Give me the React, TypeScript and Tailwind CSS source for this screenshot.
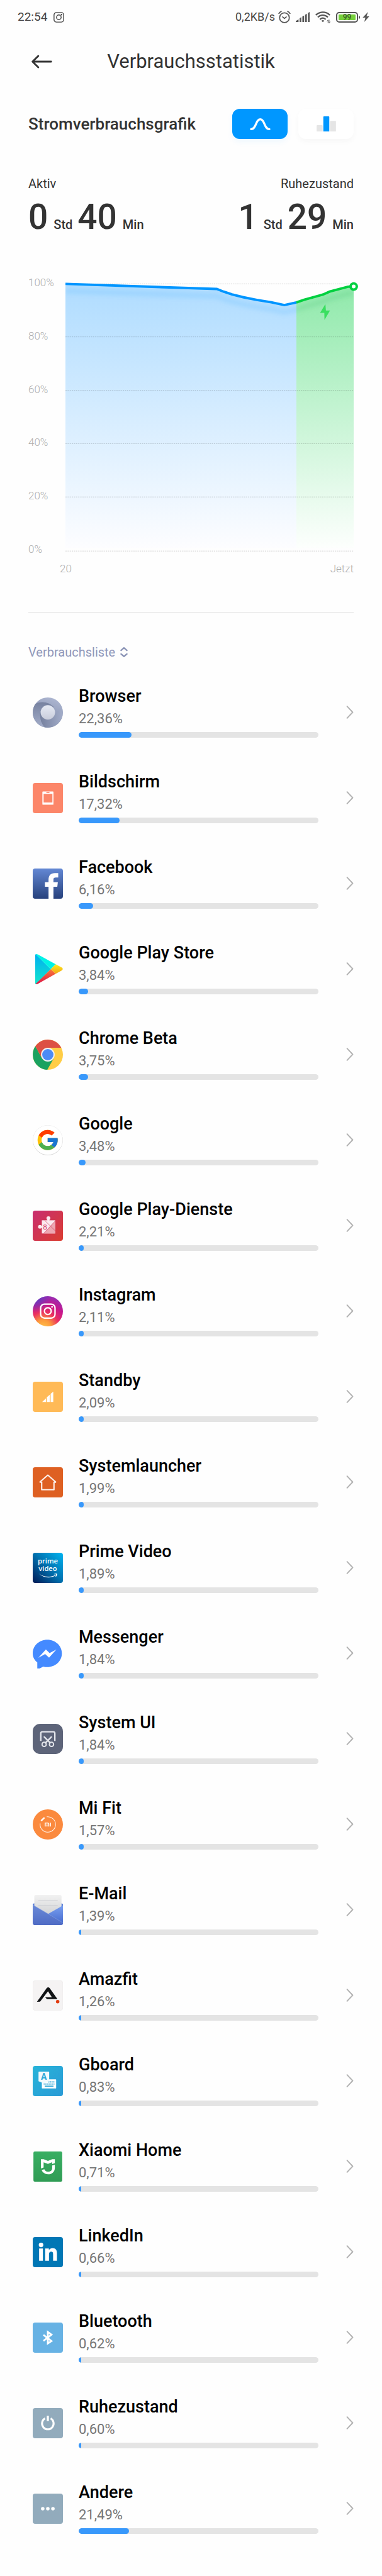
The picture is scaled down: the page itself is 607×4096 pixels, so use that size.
import { useState } from "react";
import type { ReactNode } from "react";
import { FcGoogle } from "react-icons/fc";

type Mode = "curve" | "bars";

interface UsageRow {
  name: string;
  value: number;
  icon: ReactNode;
}

const fmt = (v: number) => v.toFixed(2).replace(".", ",") + "%";

/** Battery history: x = time, y = level */
const BLUE_LINE =
  "0,22 428,36.5 447,44 471,52 504,60 541,67.5 582,74 619,82 653,74.5";
const GREEN_LINE = "653,74.5 675,67 729,52 747,44 799,30 815,29.5";
const GRID = [22, 172, 323, 474, 625, 778];

/* ---------- app icons, all on an 86 x 86 grid ---------- */

function AppIcon({ children }: { children: ReactNode }) {
  return (
    <svg viewBox="0 0 86 86" className="size-12 shrink-0" aria-hidden="true">
      {children}
    </svg>
  );
}

function Tile({ fill }: { fill: string }) {
  return <rect width="86" height="86" rx="7" fill={fill} />;
}

const BrowserIcon = (
  <AppIcon>
    <defs>
      <linearGradient id="br-a" x1="0" y1="0" x2="0" y2="1">
        <stop offset="0" stopColor="#7782a0" />
        <stop offset="1" stopColor="#a3adc9" />
      </linearGradient>
      <linearGradient id="br-b" x1="0" y1="0" x2="1" y2="0">
        <stop offset="0" stopColor="#75809e" />
        <stop offset="1" stopColor="#a3adc9" />
      </linearGradient>
      <linearGradient id="br-c" x1="0.2" y1="1" x2="0.6" y2="0">
        <stop offset="0" stopColor="#7480a0" />
        <stop offset="1" stopColor="#acb5d0" />
      </linearGradient>
      <linearGradient id="br-d" x1="0" y1="0" x2="0" y2="1">
        <stop offset="0" stopColor="#e6eaf4" />
        <stop offset="1" stopColor="#c9cddb" />
      </linearGradient>
    </defs>
    <circle cx="43" cy="43" r="43" fill="url(#br-c)" />
    <path d="M8 18C26 9 48 14 60 27L43 43L21 42C20 60 25 76 35 85A43 43 0 0 1 8 18Z" fill="url(#br-a)" />
    <path d="M21 42C20 60 25 76 35 85A43 43 0 0 0 83 29C78 40 68 46 60 48L43 43Z" fill="url(#br-b)" />
    <circle cx="43" cy="42.5" r="20.5" fill="url(#br-d)" />
  </AppIcon>
);

const ScreenIcon = (
  <AppIcon>
    <Tile fill="#fc8669" />
    <path fillRule="evenodd" fill="#fff" d="M29 24H57.5Q59 24 59 25.5V60.5Q59 62 57.5 62H29Q27.5 62 27.5 60.5V25.5Q27.5 24 29 24ZM31 31V55.5H56V31Z" />
    <rect x="38.5" y="26" width="9.5" height="2.8" rx="1.4" fill="#fc8669" />
  </AppIcon>
);

const FacebookIcon = (
  <AppIcon>
    <defs>
      <linearGradient id="fb" x1="0" y1="0" x2="0" y2="1">
        <stop offset="0" stopColor="#6388d4" />
        <stop offset="1" stopColor="#27417c" />
      </linearGradient>
    </defs>
    <Tile fill="url(#fb)" />
    <path fill="#fff" d="M45 86V52H34.7V39H45V32C45 19 52 13 63 13H72.6V25.5H66C61 25.5 59 27 59 31V39H71.5L70 52H59V86Z" />
  </AppIcon>
);

const PlayStoreIcon = (
  <AppIcon>
    <defs>
      <linearGradient id="ps-a" x1="0" y1="0" x2="0" y2="1">
        <stop offset="0" stopColor="#00aef0" />
        <stop offset="1" stopColor="#12e6cc" />
      </linearGradient>
      <linearGradient id="ps-b" x1="0" y1="0" x2="0" y2="1">
        <stop offset="0" stopColor="#ffee1c" />
        <stop offset="1" stopColor="#f2a516" />
      </linearGradient>
      <linearGradient id="ps-c" x1="0" y1="0" x2="0" y2="1">
        <stop offset="0" stopColor="#fb7a36" />
        <stop offset="1" stopColor="#dc1548" />
      </linearGradient>
    </defs>
    <path d="M7 2.5Q7 1 9 1L51.4 43L9 85.5Q7 85.5 7 83.5Z" fill="url(#ps-a)" />
    <path d="M8 0.5Q11 -0.5 15 1.5L65.5 29L51.4 43Z" fill="#00f2e6" />
    <path d="M65.5 29L83 38.5Q88 42.5 83 46.5L65 56.5L51.4 43Z" fill="url(#ps-b)" />
    <path d="M8 85.5Q11 87 15 84.5L65 56.5L51.4 43Z" fill="url(#ps-c)" />
  </AppIcon>
);

const ChromeIcon = (
  <AppIcon>
    <circle cx="43" cy="43" r="43" fill="#ffcd46" />
    <path d="M7.5 19A43 43 0 0 0 41.5 86L60 53L43 60L26 53Z" fill="#1aa260" />
    <path d="M7.5 19A43 43 0 0 1 81.3 23.5H43L26 53Z" fill="#dd5044" />
    <circle cx="43" cy="43" r="19.5" fill="#f2f2f2" />
    <circle cx="43" cy="43" r="16" fill="#4c8bf5" />
  </AppIcon>
);

const GoogleIcon = (
  <AppIcon>
    <circle cx="43" cy="43.5" r="42.5" fill="#c8c8c8" />
    <circle cx="43" cy="42.5" r="42.5" fill="#ececec" />
    <circle cx="43" cy="42.5" r="41.8" fill="#fff" />
    <FcGoogle x="8" y="8" size={69} />
  </AppIcon>
);

const PlayServicesIcon = (
  <AppIcon>
    <defs>
      <linearGradient id="gp" x1="0" y1="0" x2="1" y2="1">
        <stop offset="0" stopColor="#c82e70" />
        <stop offset="1" stopColor="#da3d30" />
      </linearGradient>
    </defs>
    <Tile fill="url(#gp)" />
    <g fill="#fbeaf0">
      <rect x="26" y="27.5" width="38" height="37.5" />
      <circle cx="44.7" cy="21.5" r="5.5" />
      <rect x="41.5" y="24" width="6" height="5" />
      <circle cx="20.5" cy="46" r="5.2" />
      <rect x="22" y="43.5" width="6" height="5" />
    </g>
    <path d="M64 29.5L31 65H64Z" fill="#eda7b2" />
    <path d="M33.7 27.5L64 57.5M64 29.5L31 65" stroke="#d23a58" strokeWidth="1.2" />
    <text x="35" y="53" textAnchor="middle" fontFamily="Liberation Serif, serif" fontSize="22" fill="#d03560">8</text>
  </AppIcon>
);

const InstagramIcon = (
  <AppIcon>
    <defs>
      <radialGradient id="ig-a" cx="0.35" cy="1.05" r="1.05">
        <stop offset="0" stopColor="#ffc24a" />
        <stop offset="0.25" stopColor="#fc9a3c" />
        <stop offset="0.5" stopColor="#ea3060" />
        <stop offset="0.75" stopColor="#c8168c" />
        <stop offset="1" stopColor="#9a2bb0" />
      </radialGradient>
      <radialGradient id="ig-b" cx="0.1" cy="0.05" r="0.5">
        <stop offset="0" stopColor="#5a40c4" />
        <stop offset="1" stopColor="#5a40c4" stopOpacity="0" />
      </radialGradient>
    </defs>
    <circle cx="43" cy="43" r="43" fill="url(#ig-a)" />
    <circle cx="43" cy="43" r="43" fill="url(#ig-b)" />
    <rect x="22.5" y="22.5" width="41" height="40" rx="11" fill="none" stroke="#fff" strokeWidth="4" />
    <circle cx="43" cy="42.5" r="9.7" fill="none" stroke="#fff" strokeWidth="4" />
    <circle cx="55" cy="30.5" r="2.5" fill="#fff" />
  </AppIcon>
);

const StandbyIcon = (
  <AppIcon>
    <Tile fill="#ffba57" />
    <path fill="#fff" d="M26.8 58L37.5 47.5V58ZM40 44.5L48.5 37V58H40ZM51 34.5L58.5 28V58H51Z" />
  </AppIcon>
);

const LauncherIcon = (
  <AppIcon>
    <Tile fill="#de6022" />
    <path d="M25.5 41V64H60.5V41M19.5 42.5H25.5M60.5 42.5H66.5M20 42.5L43 22.5L66 42.5" fill="none" stroke="#fdf0ea" strokeWidth="3.8" strokeLinejoin="round" />
  </AppIcon>
);

const PrimeVideoIcon = (
  <AppIcon>
    <defs>
      <linearGradient id="pv" x1="0" y1="1" x2="1" y2="0">
        <stop offset="0" stopColor="#001a55" />
        <stop offset="0.55" stopColor="#0077b5" />
        <stop offset="1" stopColor="#00b4f0" />
      </linearGradient>
    </defs>
    <Tile fill="url(#pv)" />
    <g fill="#fff" fontFamily="Open Sans, sans-serif" fontWeight="600" fontSize="20" textAnchor="middle">
      <text x="43" y="31">prime</text>
      <text x="43" y="52.5">video</text>
    </g>
    <path d="M17 59C32 70 51 71 65 62.5L66 64C53 73 32 73 17 59ZM61 60.5C64 59 68 58.5 69.5 60C70 62 68.5 66 66 68.5L64.8 68C66 65 66.8 62.5 66.3 61.8C65.5 61 63 61.3 61 61.5Z" fill="#fff" />
  </AppIcon>
);

const MessengerIcon = (
  <AppIcon>
    <path d="M41.5 4C18.5 4 0 21 0 43.5C0 54 5 62.5 13 68.5V86H19.5L30 80.5C33.5 81.5 37.5 82 41.5 82C64.5 82 83 65 83 43C83 21 64.5 4 41.5 4Z" fill="#448aff" />
    <path d="M16 55.6L37.5 32L48 42L67.5 32L46.5 55L35.4 44.8Z" fill="#fff" />
  </AppIcon>
);

const SystemUiIcon = (
  <AppIcon>
    <rect width="86" height="86" rx="21" fill="#5d6479" />
    <g fill="none" stroke="#e2e4ea" strokeWidth="4.2">
      <path d="M23 49V27Q23 22.5 27.5 22.5H58.5Q63 22.5 63 27V49" />
      <circle cx="32.5" cy="58.5" r="6" strokeWidth="3.5" />
      <circle cx="53.5" cy="58.5" r="6" strokeWidth="3.5" />
      <path d="M36.5 54L53 37.5M49.5 54L33 37.5" strokeLinecap="round" />
    </g>
  </AppIcon>
);

const MiFitIcon = (
  <AppIcon>
    <circle cx="43" cy="43" r="43" fill="#fb8a3e" />
    <path d="M40 21.2A22 22 0 1 1 21.2 40" fill="none" stroke="#fff3ea" strokeWidth="1.8" />
    <path d="M25 31.5L32 25" stroke="#fff" strokeWidth="4.5" strokeLinecap="round" />
    <path d="M35.5 49V39H42.5Q45.5 39 45.5 42V49M40.5 43V49M50.5 38V49" fill="none" stroke="#fff3ea" strokeWidth="3" />
  </AppIcon>
);

const MailIcon = (
  <AppIcon>
    <defs>
      <linearGradient id="ml-a" x1="0" y1="0" x2="0" y2="1">
        <stop offset="0" stopColor="#f2f2f2" />
        <stop offset="1" stopColor="#cfd0d2" />
      </linearGradient>
      <linearGradient id="ml-b" x1="0" y1="0" x2="0" y2="1">
        <stop offset="0" stopColor="#6a8ad8" />
        <stop offset="1" stopColor="#4f6bc4" />
      </linearGradient>
      <linearGradient id="ml-c" x1="0" y1="0" x2="0" y2="1">
        <stop offset="0" stopColor="#7aa0f0" />
        <stop offset="1" stopColor="#4468cc" />
      </linearGradient>
    </defs>
    <path d="M0 27Q0 24 4 24H82Q86 24 86 27V60H0Z" fill="#5b7fd8" />
    <path d="M4.5 5Q4.5 0 9 0H77Q82 0 82 5V60H4.5Z" fill="url(#ml-a)" />
    <path d="M16 16.5H71M16 30.5H71" stroke="#c6c8cb" strokeWidth="1.5" />
    <path d="M86 30L44 54L40 60L86 84Z" fill="url(#ml-c)" />
    <path d="M0 28L44 54L86 80Q86 86 79 86H7Q0 86 0 80Z" fill="url(#ml-b)" />
    <path d="M0 28.5L44 54L86 79.5" fill="none" stroke="#8aa4e6" />
  </AppIcon>
);

const AmazfitIcon = (
  <AppIcon>
    <rect x="0.5" y="0.5" width="85" height="85" rx="7" fill="#f5f3f3" stroke="#e8e6e6" />
    <path d="M12 61L40 21.5Q44 17.5 48 21.5L70.5 53.5H40.5L35.4 48H54.5L43.5 31L21 60.5Z" fill="#111315" />
    <circle cx="71" cy="60.6" r="5" fill="#e23c10" />
  </AppIcon>
);

const GboardIcon = (
  <AppIcon>
    <defs>
      <linearGradient id="gb" x1="0" y1="0" x2="1" y2="1">
        <stop offset="0" stopColor="#27b4d9" />
        <stop offset="1" stopColor="#2a9ad6" />
      </linearGradient>
    </defs>
    <Tile fill="url(#gb)" />
    <rect x="26" y="38" width="40.7" height="26" rx="1.5" fill="#fff" />
    <path d="M44 45.5H64M31 51.5H62" stroke="#2aa4d6" strokeWidth="3" strokeDasharray="3.5 1.2" />
    <path d="M34 57.5H59" stroke="#2aa4d6" strokeWidth="3" />
    <path d="M18 16H45.5Q46.8 16 46.8 17.5V43.5L31.6 49.5L16.5 43.5V17.5Q16.5 16 18 16Z" fill="#f2fafd" />
    <text x="31.6" y="39" textAnchor="middle" fontFamily="Roboto, sans-serif" fontWeight="700" fontSize="25" fill="#2aa9d8">A</text>
  </AppIcon>
);

const XiaomiHomeIcon = (
  <AppIcon>
    <defs>
      <linearGradient id="xh" x1="0" y1="0" x2="0" y2="1">
        <stop offset="0" stopColor="#38ae62" />
        <stop offset="1" stopColor="#309c55" />
      </linearGradient>
    </defs>
    <rect x="2" width="82" height="86" rx="4" fill="url(#xh)" />
    <path fill="#fff" d="M23.3 22H31L43.3 27L55.5 22H63V33L55.4 36V30.5L43.3 35.5L31 31V45.5L23.3 48.5ZM25.5 53L33 50.5C35 55 39 57.5 44 57.5C51 57.5 55.4 54 55.4 47V40L63 37.5V46C63 58 55 65 43.5 65C35 65 28 60 25.5 53Z" />
  </AppIcon>
);

const LinkedInIcon = (
  <AppIcon>
    <Tile fill="#0077b5" />
    <circle cx="23.7" cy="22.5" r="6.5" fill="#fff" />
    <path fill="#fff" d="M18.2 32.7H29V67.7H18.2ZM35.4 32.7H46V37.5C48 34 52 32 56.5 32C66 32 69 38 69 47V67.7H58V49.5C58 44 57 41.5 52.5 41.5C48 41.5 46.3 44.5 46.3 49.5V67.7H35.4Z" />
  </AppIcon>
);

const BluetoothIcon = (
  <AppIcon>
    <Tile fill="#67b2e4" />
    <path d="M30.5 35L53.5 52.5L43 59.5V27L53.5 34.5L30.5 52" fill="none" stroke="#fff" strokeWidth="5" />
  </AppIcon>
);

const PowerIcon = (
  <AppIcon>
    <Tile fill="#92abbc" />
    <path d="M35 29.5A16.5 16.5 0 1 0 51 29.5" fill="none" stroke="#fff" strokeWidth="5.5" />
    <rect x="40" y="22" width="6" height="15" fill="#fff" />
  </AppIcon>
);

const OtherIcon = (
  <AppIcon>
    <Tile fill="#92abbc" />
    <g fill="#fff">
      <circle cx="28.5" cy="43" r="5" />
      <circle cx="43" cy="43" r="5" />
      <circle cx="57.5" cy="43" r="5" />
    </g>
  </AppIcon>
);

const ROWS: UsageRow[] = [
  { name: "Browser", value: 22.36, icon: BrowserIcon },
  { name: "Bildschirm", value: 17.32, icon: ScreenIcon },
  { name: "Facebook", value: 6.16, icon: FacebookIcon },
  { name: "Google Play Store", value: 3.84, icon: PlayStoreIcon },
  { name: "Chrome Beta", value: 3.75, icon: ChromeIcon },
  { name: "Google", value: 3.48, icon: GoogleIcon },
  { name: "Google Play-Dienste", value: 2.21, icon: PlayServicesIcon },
  { name: "Instagram", value: 2.11, icon: InstagramIcon },
  { name: "Standby", value: 2.09, icon: StandbyIcon },
  { name: "Systemlauncher", value: 1.99, icon: LauncherIcon },
  { name: "Prime Video", value: 1.89, icon: PrimeVideoIcon },
  { name: "Messenger", value: 1.84, icon: MessengerIcon },
  { name: "System UI", value: 1.84, icon: SystemUiIcon },
  { name: "Mi Fit", value: 1.57, icon: MiFitIcon },
  { name: "E-Mail", value: 1.39, icon: MailIcon },
  { name: "Amazfit", value: 1.26, icon: AmazfitIcon },
  { name: "Gboard", value: 0.83, icon: GboardIcon },
  { name: "Xiaomi Home", value: 0.71, icon: XiaomiHomeIcon },
  { name: "LinkedIn", value: 0.66, icon: LinkedInIcon },
  { name: "Bluetooth", value: 0.62, icon: BluetoothIcon },
  { name: "Ruhezustand", value: 0.6, icon: PowerIcon },
  { name: "Andere", value: 21.49, icon: OtherIcon },
];

function StatusBar() {
  return (
    <div className="flex h-[54px] items-center justify-between pl-7 pr-5 text-[#444]">
      <div className="flex items-center gap-[10px]">
        <span className="text-[19px] leading-6">22:54</span>
        <svg viewBox="0 0 30 30" className="size-[17px]" fill="none" stroke="#444" strokeWidth="2.5" aria-hidden="true">
          <rect x="1.5" y="1.5" width="27" height="27" rx="7" />
          <circle cx="15" cy="15" r="6.5" />
          <circle cx="22.5" cy="7.5" r="1" fill="#444" />
        </svg>
      </div>
      <div className="flex items-center">
        <span className="text-[18px] leading-6">0,2KB/s</span>
        <svg viewBox="0 0 35 35" className="ml-[5px] size-5" fill="none" stroke="#555" strokeWidth="3" aria-hidden="true">
          <circle cx="17.5" cy="19.5" r="13.5" />
          <path d="M11.5 16.5L17.5 21.5L23.5 16.5M1.5 9C3 5.5 6 3 9.5 1.5M33.5 9C32 5.5 29 3 25.5 1.5" />
        </svg>
        <svg viewBox="0 0 40 29" className="ml-2 h-4 w-[22px]" fill="#555" aria-hidden="true">
          <path d="M0 29V26.5L8 21.5V29ZM11 29V18L16 15V29ZM19 29V13L24 10.5V29ZM27 29V8L32 5V29ZM35 29V3L40 0V29Z" />
        </svg>
        <svg viewBox="0 0 42 33" className="ml-[9px] h-[19px] w-6" fill="none" stroke="#555" strokeWidth="4" aria-hidden="true">
          <path d="M1.5 10.5C12 -0.5 30 -0.5 40.5 10.5M7 16.5C15 8.5 27 8.5 35 16.5M13 22.5C18 17.5 24 17.5 29 22.5" />
          <path d="M17 26Q21 22.5 25 26L21 30Z" fill="#555" stroke="none" />
          <path d="M35.5 33V24L32 28M38.5 23V33L42 28" strokeWidth="1.5" />
        </svg>
        <div className="ml-[9px] flex h-[17px] w-[35px] items-center justify-center rounded-[5px] border-2 border-[#555] p-[2px]">
          <span className="flex h-full w-full items-center justify-center rounded-[1px] bg-[#76d03c] text-[12px] leading-[9px] text-[#2e4a1e]">
            99
          </span>
        </div>
        <span className="ml-px h-[5px] w-[2px] rounded-r bg-[#555]" />
        <svg viewBox="0 0 19 29" className="ml-1 h-4 w-[11px]" fill="#555" aria-hidden="true">
          <path d="M15.5 0L0 16.5H8L4.5 29L19 12.5H11Z" />
        </svg>
      </div>
    </div>
  );
}

function Duration({ hours, minutes }: { hours: number; minutes: number }) {
  return (
    <div className="flex items-baseline font-medium text-[#333]">
      <span className="text-[55px] leading-[56px]">{hours}</span>
      <span className="ml-[9px] text-[20px]">Std</span>
      <span className="ml-2 text-[55px] leading-[56px]">{minutes}</span>
      <span className="ml-[9px] text-[20px]">Min</span>
    </div>
  );
}

function BatteryChart() {
  return (
    <svg viewBox="0 0 815 790" className="h-auto min-w-0 flex-1 overflow-visible" role="img" aria-label="Akkustand">
      <defs>
        <linearGradient id="area-blue" x1="0" y1="0" x2="0" y2="1">
          <stop offset="0" stopColor="#afdcff" />
          <stop offset="1" stopColor="#fdfdff" />
        </linearGradient>
        <linearGradient id="area-green" x1="0" y1="0" x2="0" y2="1">
          <stop offset="0" stopColor="#90e9ab" />
          <stop offset="1" stopColor="#fdfffd" />
        </linearGradient>
        <filter id="soft" x="-10%" y="-100%" width="120%" height="300%">
          <feGaussianBlur stdDeviation="7" />
        </filter>
        <clipPath id="area-clip">
          <polygon points={`${BLUE_LINE} ${GREEN_LINE} 815,778 0,778`} />
        </clipPath>
      </defs>
      <polygon points={`${BLUE_LINE} 653,770 0,770`} fill="url(#area-blue)" />
      <polygon points={`${GREEN_LINE} 815,770 653,770`} fill="url(#area-green)" />
      <g clipPath="url(#area-clip)">
        <g fill="none" strokeWidth="14" filter="url(#soft)" transform="translate(0 20)">
          <polyline points={BLUE_LINE} stroke="#0091ff" strokeOpacity="0.12" />
          <polyline points={GREEN_LINE} stroke="#10a040" strokeOpacity="0.12" />
        </g>
      </g>
      {GRID.map((y) => (
        <line key={y} x1="0" x2="815" y1={y} y2={y} stroke="#000" strokeOpacity="0.35" strokeWidth="1" strokeDasharray="3.5 2.5" />
      ))}
      <polyline points={BLUE_LINE} fill="none" stroke="#0095ff" strokeWidth="7" />
      <polyline points={GREEN_LINE} fill="none" stroke="#00d040" strokeWidth="7" />
      <circle cx="815" cy="29.5" r="8.8" fill="#fff" stroke="#00d040" strokeWidth="7" />
      <path d="M735 79L720 104H732L732.5 124L748 97.5H736.5Z" fill="#3adf60" />
    </svg>
  );
}

export default function App() {
  const [mode, setMode] = useState<Mode>("curve");

  return (
    <main className="min-h-screen bg-[#fefefe] pb-10 font-['Roboto',sans-serif]">
      <StatusBar />

      <header className="grid h-[88px] grid-cols-[1fr_auto_1fr] items-center px-[45px]">
        <button type="button" aria-label="Zurück" className="w-fit pl-[5px]">
          <svg viewBox="0 0 58 38" className="h-[22px] w-[33px]" fill="none" stroke="#333" strokeWidth="5" strokeLinecap="round" strokeLinejoin="round">
            <path d="M55 19H4M19 3L3 19L19 35" />
          </svg>
        </button>
        <h1 className="text-[31px] leading-10 text-[#333]">Verbrauchsstatistik</h1>
      </header>

      <div className="px-[45px]">
        <section className="pt-[31px]">
          <div className="flex items-center justify-between">
            <h2 className="text-[26px] font-medium leading-8 text-[#333]">Stromverbrauchsgrafik</h2>
            <div className="flex gap-[17px]">
              <button
                type="button"
                aria-label="Kurve"
                aria-pressed={mode === "curve"}
                onClick={() => setMode("curve")}
                className="flex h-12 w-[88px] items-center justify-center rounded-xl bg-[#0097ff] shadow-[0_5px_10px_rgba(0,145,255,0.06)]"
              >
                <svg viewBox="0 0 58 34" className="h-[19px] w-[33px]" fill="none" stroke="#fff" strokeWidth="6" strokeLinecap="round">
                  <path d="M3 31C18 31 16 3 29 3C42 3 40 31 55 31" />
                </svg>
              </button>
              <button
                type="button"
                aria-label="Balken"
                aria-pressed={mode === "bars"}
                onClick={() => setMode("bars")}
                className="flex h-12 w-[88px] items-center justify-center rounded-xl bg-white shadow-[0_4px_10px_rgba(0,0,0,0.03)]"
              >
                <svg viewBox="0 0 55 43" className="h-6 w-[31px]">
                  <path d="M0 43V27Q0 25 2 25H15Q17 25 17 27V43ZM38 43V15Q38 13 40 13H53Q55 13 55 15V43Z" fill="#e5e5e5" />
                  <path d="M19 43V2Q19 0 21 0H34Q36 0 36 2V43Z" fill="#0097ff" />
                </svg>
              </button>
            </div>
          </div>

          <div className="mt-[59px] flex justify-between">
            <div className="flex flex-col gap-[13px]">
              <span className="text-[20px] leading-6 text-[#333]">Aktiv</span>
              <Duration hours={0} minutes={40} />
            </div>
            <div className="flex flex-col items-end gap-[13px]">
              <span className="text-[20px] leading-6 text-[#333]">Ruhezustand</span>
              <Duration hours={1} minutes={29} />
            </div>
          </div>

          <div className="mt-[66px] flex">
            <div className="flex w-[59px] flex-col justify-between text-[17px] font-light leading-5 text-[#adadad]">
              {[100, 80, 60, 40, 20, 0].map((p) => (
                <span key={p}>{p}%</span>
              ))}
            </div>
            <BatteryChart />
          </div>
          <div className="mt-[11px] flex justify-between pl-[50px] text-[17px] font-light leading-5 text-[#adadad]">
            <span>20</span>
            <span>Jetzt</span>
          </div>
        </section>

        <hr className="mt-[59px] border-[#e4e4e4]" />

        <button type="button" className="mt-[51px] flex items-center gap-2 text-[20px] leading-6 text-[#9098ba]">
          Verbrauchsliste
          <svg viewBox="0 0 20 28" className="h-4 w-3" fill="none" stroke="#8b94b6" strokeWidth="4" strokeLinecap="round" strokeLinejoin="round">
            <path d="M2 9L10 2L18 9M2 19L10 26L18 19" />
          </svg>
        </button>

        <ul className="mt-4">
          {ROWS.map((r) => (
            <li key={r.name}>
              <button type="button" className="flex h-[136px] w-full items-center pl-[7px] text-left">
                {r.icon}
                <span className="ml-[25px] flex min-w-0 flex-1 flex-col">
                  <span className="text-[27px] font-medium leading-[30px] text-black">{r.name}</span>
                  <span className="mt-2 text-[22px] leading-[26px] text-[#767676]">{fmt(r.value)}</span>
                  <span className="mt-2 h-[9px] overflow-hidden rounded-full bg-[#e4e4e4]">
                    <span
                      className="block h-full rounded-full bg-[#3898fb]"
                      style={{ width: `${Math.max(1, Math.round(r.value))}%` }}
                    />
                  </span>
                </span>
                <svg viewBox="0 0 20 38" className="ml-11 h-[21px] w-3 shrink-0" fill="none" stroke="#b3b3b3" strokeWidth="3.5" strokeLinecap="round" strokeLinejoin="round">
                  <path d="M2 2L18 19L2 36" />
                </svg>
              </button>
            </li>
          ))}
        </ul>
      </div>
    </main>
  );
}
